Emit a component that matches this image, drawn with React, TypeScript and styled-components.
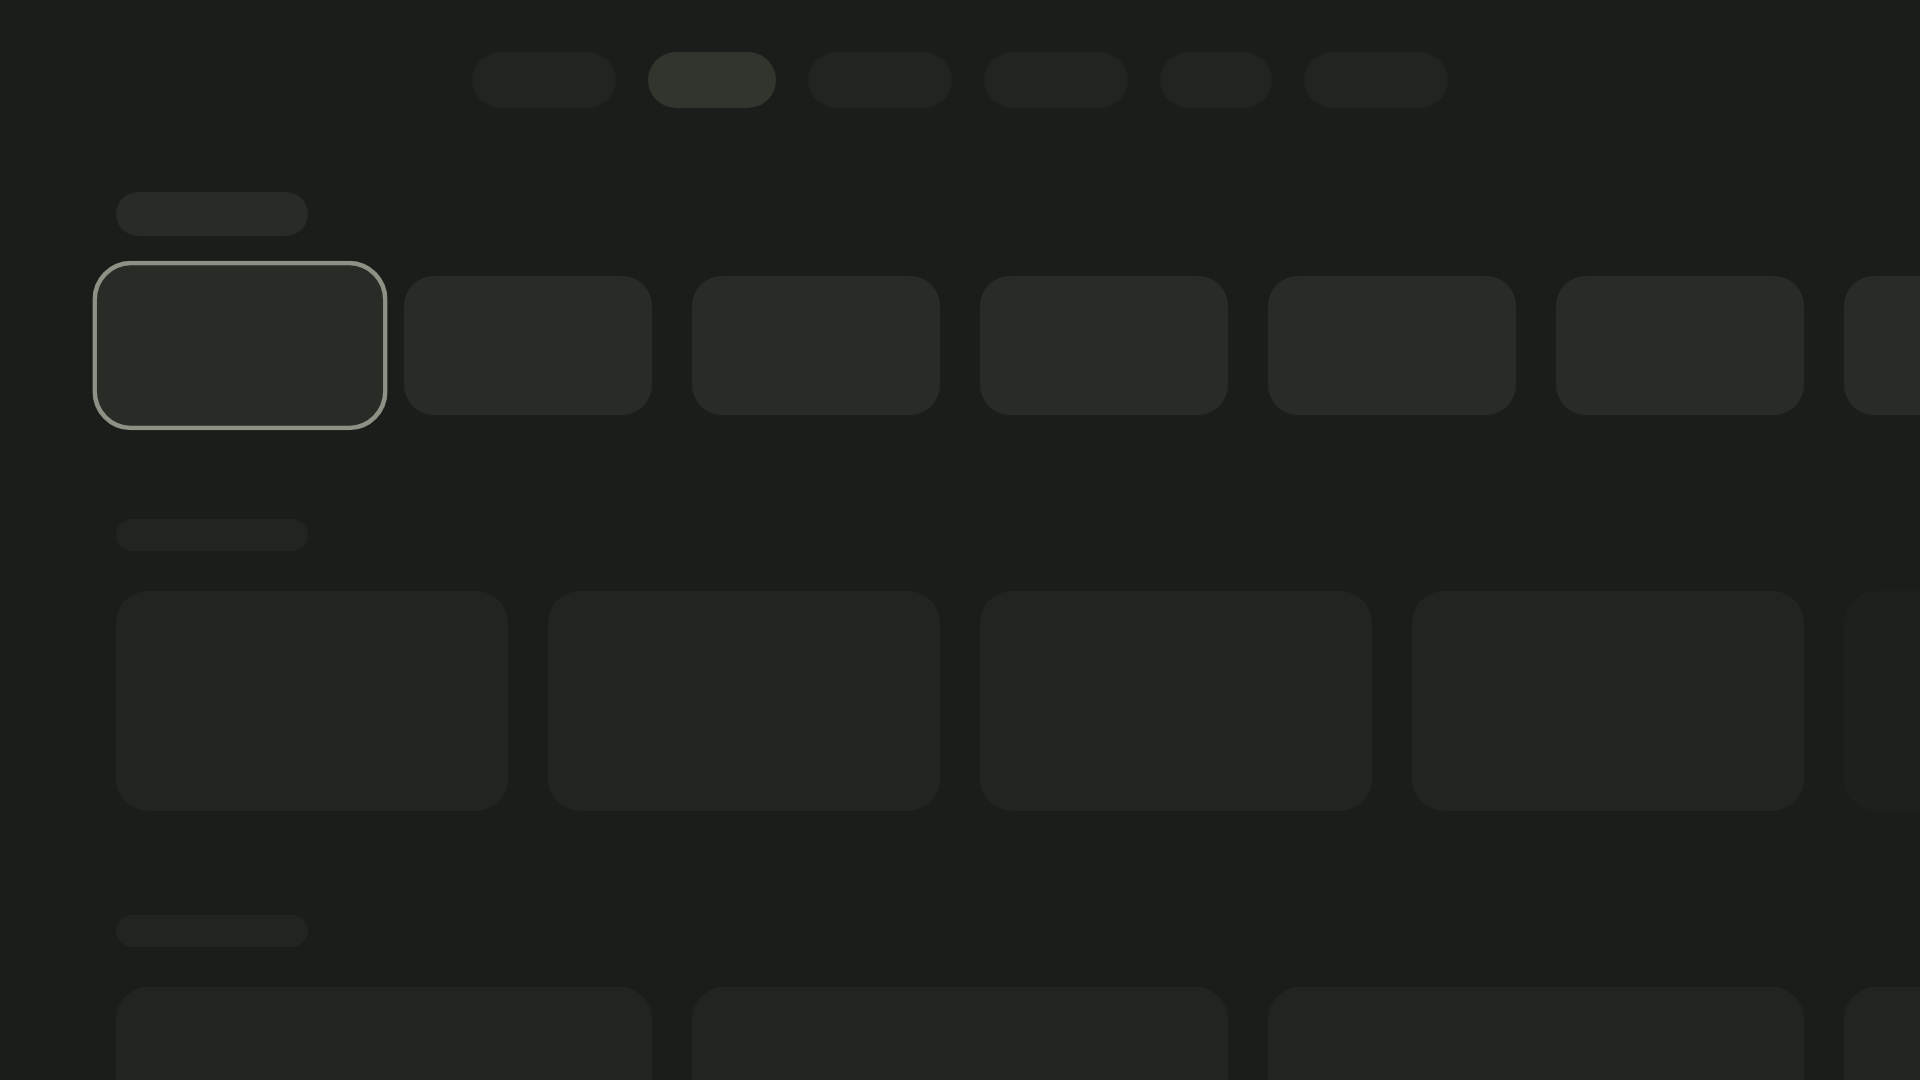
import React from 'react';
import styled, { createGlobalStyle } from 'styled-components';

const GlobalStyle = createGlobalStyle`
  html, body {
    margin: 0;
    padding: 0;
    background: #1b1d1b;
    font-family: "Noto Sans", "Liberation Sans", sans-serif;
  }
  body {
    width: 1920px;
    height: 1080px;
    overflow: hidden;
  }
`

const Page = styled.div`
  width: 1920px;
  height: 1080px;
  overflow: hidden;
  background: #1b1d1b;
`

const Nav = styled.nav`
  display: flex;
  justify-content: center;
  gap: 32px;
  padding-top: 52px;
`

const NavPill = styled.div<{ $w: number; $active?: boolean }>`
  width: ${p => p.$w}px;
  height: 56px;
  border-radius: 28px;
  background: ${p => (p.$active ? '#32352e' : '#21241f')};
`

const Main = styled.main`
  display: flex;
  flex-direction: column;
  gap: 104px;
  padding: 84px 0 0 116px;
`

const Section = styled.section`
  display: flex;
  flex-direction: column;
  gap: 40px;
`

const TitleBar = styled.div<{ $big?: boolean }>`
  width: 192px;
  height: ${p => (p.$big ? 44 : 32)}px;
  border-radius: 22px;
  background: ${p => (p.$big ? '#282b27' : '#21251f')};
`

const Row = styled.div`
  display: flex;
  gap: 40px;
`

const Tile = styled.div<{ $w: number; $h: number; $r: number; $tone: string }>`
  flex-shrink: 0;
  width: ${p => p.$w}px;
  height: ${p => p.$h}px;
  border-radius: ${p => p.$r}px;
  background: ${p => p.$tone};
`

const FocusTile = styled(Tile)`
  position: relative;
  z-index: 1;
  transform: scale(1.19, 1.22);
  box-shadow: inset 0 0 0 3.8px #8e9185;
`

const navItems = [144, 128, 144, 144, 112, 144];

const App: React.FunctionComponent = () => {
  return (
    <Page>
      <GlobalStyle />
      <Nav>
        {navItems.map((w, i) => (
          <NavPill key={i} $w={w} $active={i === 1} />
        ))}
      </Nav>
      <Main>
        <Section>
          <TitleBar $big />
          <Row>
            <FocusTile $w={248} $h={139} $r={32} $tone="#282c27" />
            {[0, 1, 2, 3, 4, 5].map(i => (
              <Tile key={i} $w={248} $h={139} $r={30} $tone="#282c27" />
            ))}
          </Row>
        </Section>
        <Section>
          <TitleBar />
          <Row>
            {[0, 1, 2, 3].map(i => (
              <Tile key={i} $w={392} $h={220} $r={32} $tone="#21251f" />
            ))}
            <Tile $w={392} $h={220} $r={32} $tone="#1d201c" />
          </Row>
        </Section>
        <Section>
          <TitleBar />
          <Row>
            {[0, 1, 2, 3].map(i => (
              <Tile key={i} $w={536} $h={300} $r={32} $tone="#21251f" />
            ))}
          </Row>
        </Section>
      </Main>
    </Page>
  );
}

export default App;
